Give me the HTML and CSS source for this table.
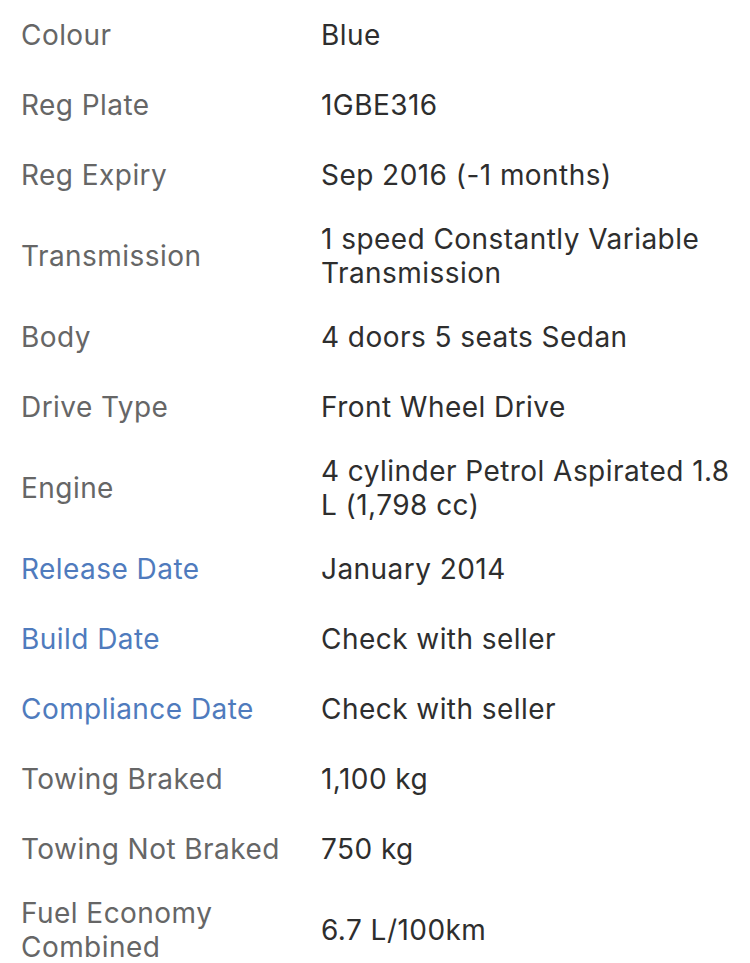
FILE: index.html
```html
<!DOCTYPE html>
<html>
<head>
<meta charset="utf-8">
<link rel="stylesheet" href="styles.css">
</head>
<body>
<div class="specs">
  <div class="row"><div class="label">Colour</div><div class="value">Blue</div></div>
  <div class="row"><div class="label">Reg Plate</div><div class="value">1GBE316</div></div>
  <div class="row"><div class="label">Reg Expiry</div><div class="value">Sep 2016 (-1 months)</div></div>
  <div class="row"><div class="label">Transmission</div><div class="value">1 speed Constantly Variable Transmission</div></div>
  <div class="row"><div class="label">Body</div><div class="value">4 doors 5 seats Sedan</div></div>
  <div class="row"><div class="label">Drive Type</div><div class="value">Front Wheel Drive</div></div>
  <div class="row"><div class="label">Engine</div><div class="value">4 cylinder Petrol Aspirated 1.8 L (1,798 cc)</div></div>
  <div class="row"><div class="label link">Release Date</div><div class="value">January 2014</div></div>
  <div class="row"><div class="label link">Build Date</div><div class="value">Check with seller</div></div>
  <div class="row"><div class="label link">Compliance Date</div><div class="value">Check with seller</div></div>
  <div class="row"><div class="label">Towing Braked</div><div class="value">1,100 kg</div></div>
  <div class="row"><div class="label">Towing Not Braked</div><div class="value">750 kg</div></div>
  <div class="row"><div class="label">Fuel Economy Combined</div><div class="value">6.7 L/100km</div></div>
</div>
</body>
</html>
```
FILE: styles.css
```css
html, body {
  margin: 0;
  padding: 0;
  background: #ffffff;
}
body {
  font-family: Inter, "Liberation Sans", sans-serif;
  font-size: 28px;
  line-height: 34px;
  letter-spacing: 0.45px;
  -webkit-font-smoothing: antialiased;
}
.specs {
  display: flex;
  flex-direction: column;
}
.row {
  display: grid;
  grid-template-columns: 300px 1fr;
  align-items: center;
  min-height: 70px;
  padding: 12px 0;
  box-sizing: border-box;
}
.label {
  padding-left: 21px;
  color: #666666;
}
.label.link {
  color: #4f7bbd;
}
.value {
  padding-left: 21px;
  padding-right: 14px;
  color: #2e2e2e;
}
```
